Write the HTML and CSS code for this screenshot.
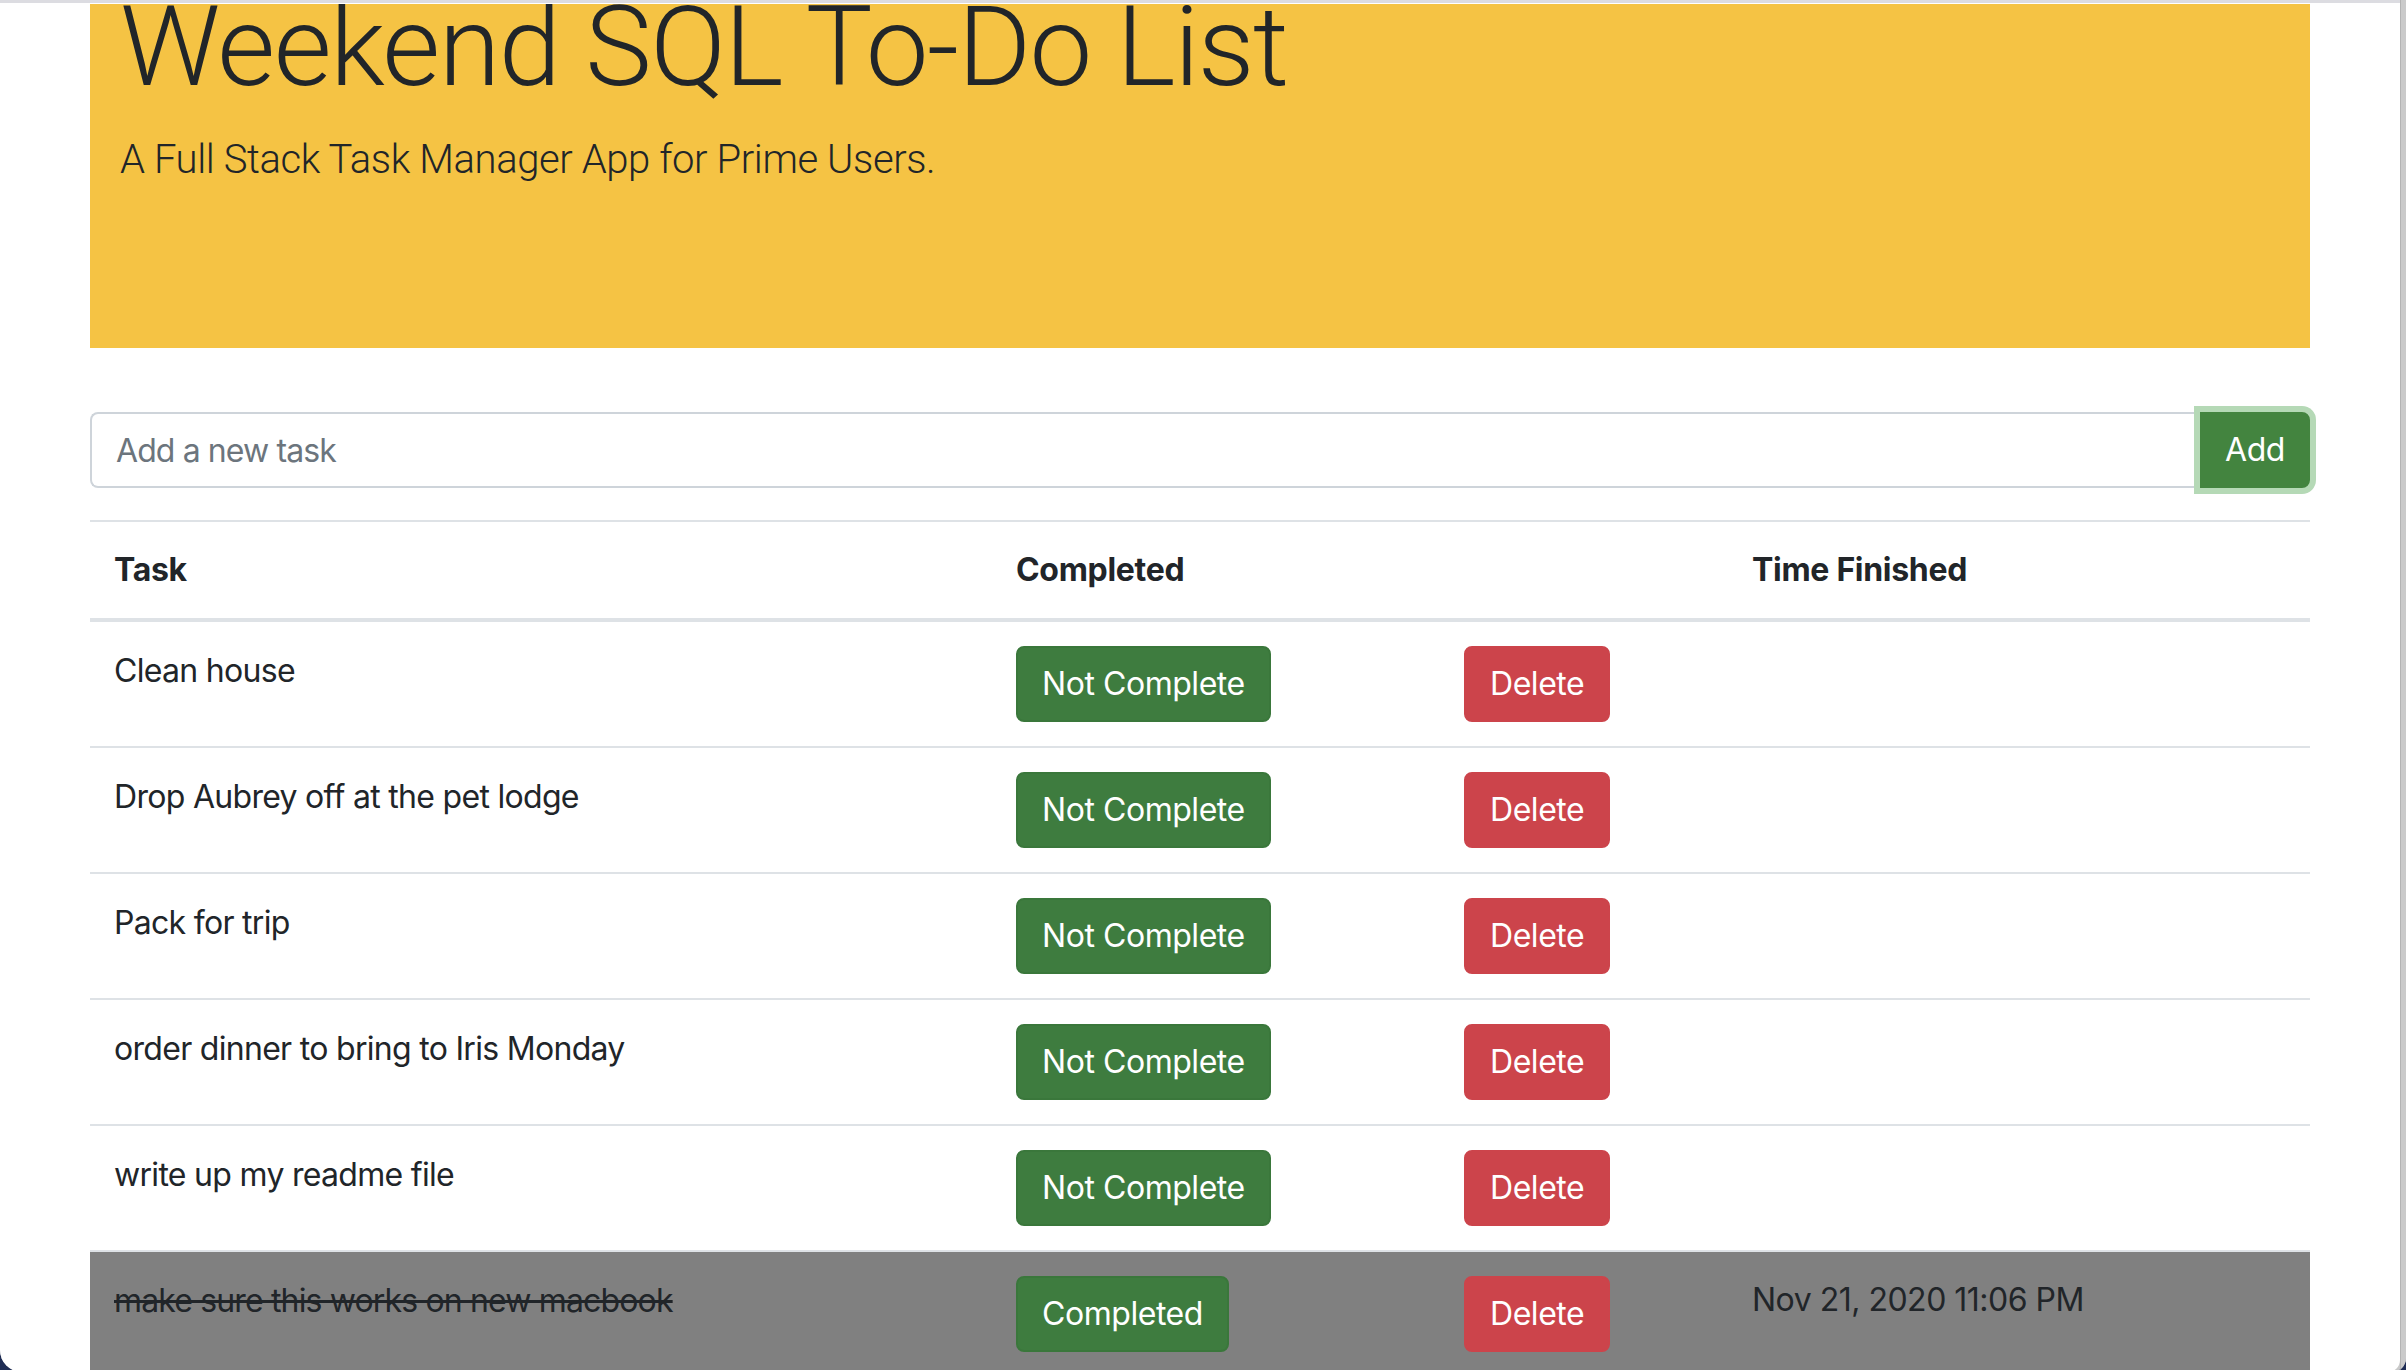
FILE: index.html
```html
<!DOCTYPE html>
<html lang="en">
<head>
<meta charset="utf-8">
<title>Weekend SQL To-Do List</title>
<link rel="stylesheet" href="styles.css">
</head>
<body>
<div class="window">
  <main class="page">
    <div class="container">
      <header class="jumbotron">
        <h1 class="title">Weekend SQL To-Do List</h1>
        <p class="lead">A Full Stack Task Manager App for Prime Users.</p>
      </header>

      <div class="input-group">
        <input class="task-input" type="text" placeholder="Add a new task">
        <button class="btn btn-add">Add</button>
      </div>

      <table class="task-table">
        <colgroup>
          <col class="col-task">
          <col class="col-status">
          <col class="col-delete">
          <col class="col-time">
        </colgroup>
        <thead>
          <tr>
            <th>Task</th>
            <th>Completed</th>
            <th></th>
            <th>Time Finished</th>
          </tr>
        </thead>
        <tbody>
          <tr>
            <td class="task-name">Clean house</td>
            <td><button class="btn btn-green">Not Complete</button></td>
            <td><button class="btn btn-red">Delete</button></td>
            <td></td>
          </tr>
          <tr>
            <td class="task-name">Drop Aubrey off at the pet lodge</td>
            <td><button class="btn btn-green">Not Complete</button></td>
            <td><button class="btn btn-red">Delete</button></td>
            <td></td>
          </tr>
          <tr>
            <td class="task-name">Pack for trip</td>
            <td><button class="btn btn-green">Not Complete</button></td>
            <td><button class="btn btn-red">Delete</button></td>
            <td></td>
          </tr>
          <tr>
            <td class="task-name">order dinner to bring to Iris Monday</td>
            <td><button class="btn btn-green">Not Complete</button></td>
            <td><button class="btn btn-red">Delete</button></td>
            <td></td>
          </tr>
          <tr>
            <td class="task-name">write up my readme file</td>
            <td><button class="btn btn-green">Not Complete</button></td>
            <td><button class="btn btn-red">Delete</button></td>
            <td></td>
          </tr>
          <tr class="done">
            <td class="task-name done-text">make sure this works on new macbook</td>
            <td><button class="btn btn-green">Completed</button></td>
            <td><button class="btn btn-red">Delete</button></td>
            <td>Nov 21, 2020 11:06 PM</td>
          </tr>
        </tbody>
      </table>
    </div>
  </main>
  <div class="scrollbar"></div>
</div>
</body>
</html>
```

FILE: styles.css
```css
html, body {
  margin: 0;
  padding: 0;
  height: 100%;
  overflow: hidden;
}

body {
  background: #1f2d55;
  font-family: Inter, "Liberation Sans", Arial, sans-serif;
  font-size: 32px;
  line-height: 1.5;
  letter-spacing: -0.5px;
  color: #212529;
}

.window {
  display: flex;
  height: 1372px;
  background: #c9c9c9;
  border-bottom-left-radius: 22px;
  border-bottom-right-radius: 14px;
  overflow: hidden;
}

.page {
  flex: 1;
  background: #ffffff;
  border-top: 3px solid #dcdce1;
  border-bottom-right-radius: 12px;
  overflow: hidden;
}

.scrollbar {
  width: 5px;
  border-left: 1px solid #b3b3b3;
  background: #cacaca;
}

.container {
  width: 2220px;
  margin: 0 auto;
}

.jumbotron {
  background: #f5c344;
  height: 344px;
  margin-top: 1px;
  padding: 0 30px;
  box-sizing: border-box;
  overflow: hidden;
}

.title {
  margin: -24px 0 16px;
  font-family: Roboto, Inter, sans-serif;
  font-size: 112px;
  font-weight: 300;
  line-height: 1.2;
  letter-spacing: -1.5px;
}

.lead {
  margin: 0;
  font-family: Roboto, Inter, sans-serif;
  font-size: 40px;
  font-weight: 300;
  line-height: 1.5;
  letter-spacing: -0.4px;
}

.input-group {
  display: flex;
  margin-top: 64px;
  height: 76px;
}

.task-input {
  flex: 1;
  box-sizing: border-box;
  height: 76px;
  border: 2px solid #ced4da;
  border-right: none;
  border-radius: 8px 0 0 8px;
  padding: 12px 24px;
  font-family: inherit;
  font-size: 32px;
  letter-spacing: -0.9px;
  color: #495057;
  background: #fff;
  outline: none;
}

.task-input::placeholder {
  color: #6c757d;
}

.btn {
  box-sizing: border-box;
  display: inline-block;
  padding: 12px 24px;
  font-family: inherit;
  font-size: 32px;
  line-height: 48px;
  letter-spacing: -0.45px;
  border: 2px solid transparent;
  border-radius: 8px;
  color: #fff;
  cursor: pointer;
}

.btn-add {
  width: 110px;
  height: 76px;
  padding: 12px 0;
  text-align: center;
  background: #43843f;
  border-color: #43843f;
  border-radius: 0 8px 8px 0;
  box-shadow: 0 0 0 6px #b5d9b6;
  position: relative;
}

.btn-green {
  background: #3e7c3f;
  border-color: #3a773b;
}

.btn-red {
  background: #cc444b;
  border-color: #cc444b;
}

.task-table {
  width: 100%;
  margin-top: 32px;
  border-collapse: collapse;
  table-layout: fixed;
}

.col-task { width: 902px; }
.col-status { width: 448px; }
.col-delete { width: 288px; }
.col-time { width: 582px; }

.task-table th,
.task-table td {
  padding: 24px;
  text-align: left;
  vertical-align: top;
  border-top: 2px solid #dee2e6;
  line-height: 48px;
}

.task-table th {
  font-weight: 700;
  letter-spacing: -0.3px;
  border-bottom: 4px solid #dee2e6;
}

.task-table thead + tbody tr:first-child td {
  border-top: none;
}

.task-table .task-name {
  padding-top: 25px;
  letter-spacing: -0.7px;
}

.done td {
  background: #808080;
}

.task-table .done-text {
  text-decoration: line-through;
  letter-spacing: -0.85px;
}
```
